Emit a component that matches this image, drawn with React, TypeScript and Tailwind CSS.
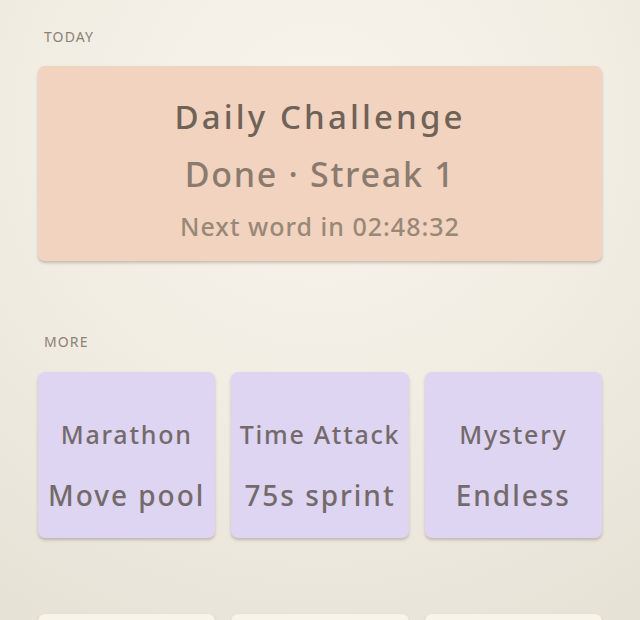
import React from 'react';

type Mode = { title: string; sub: string };

const modes: Mode[] = [
  { title: 'Marathon', sub: 'Move pool' },
  { title: 'Time Attack', sub: '75s sprint' },
  { title: 'Mystery', sub: 'Endless' },
];

const SectionLabel: React.FC<{ children: React.ReactNode }> = ({ children }) => (
  <div className="px-[6px] text-[14px] leading-4 tracking-[0.08em] text-[#8a8276]">{children}</div>
);

export default function App() {
  return (
    <div
      className="min-h-screen w-full bg-[radial-gradient(ellipse_90%_70%_at_50%_15%,#f7f4ec_0%,#f1ede3_50%,#e6e2d6_100%)] px-[38px] pt-[29px] pb-10 text-[#6f6259]"
      style={{ fontFamily: '"Noto Sans", "Open Sans", sans-serif' }}
    >
      <SectionLabel>TODAY</SectionLabel>

      {/* daily challenge */}
      <div className="mt-[21px] h-[195px] rounded-[7px] bg-[#f2d3bf] shadow-[0_2px_3px_rgba(90,75,55,0.3)] flex flex-col items-center pt-[31px]">
        <div className="text-[33px] leading-[40px] font-medium tracking-[0.095em] text-[#6f6259]">Daily Challenge</div>
        <div className="mt-[17px] text-[34px] leading-[40px] font-medium tracking-[0.05em] text-[#8b7b6f]">Done · Streak 1</div>
        <div className="mt-[16px] text-[25px] leading-[32px] font-medium tracking-[0.04em] text-[#988878]">Next word in 02:48:32</div>
      </div>

      <div className="mt-[73px]">
        <SectionLabel>MORE</SectionLabel>
      </div>

      <div className="mt-[22px] grid grid-cols-3 gap-4">
        {modes.map(m => (
          <div
            key={m.title}
            className="h-[166px] rounded-[7px] bg-[#ddd5f1] shadow-[0_2px_3px_rgba(90,75,55,0.3)] flex flex-col items-center pt-[46px]"
          >
            <div className="text-[25px] leading-[32px] font-medium tracking-[0.07em] text-[#746a6b] whitespace-nowrap">{m.title}</div>
            <div className="mt-[29px] text-[28px] leading-[32px] font-medium tracking-[0.07em] text-[#746a6b] whitespace-nowrap">{m.sub}</div>
          </div>
        ))}
      </div>

      <div className="mt-[76px] grid grid-cols-3 gap-4">
        {[0, 1, 2].map(i => (
          <div key={i} className="h-[166px] rounded-[7px] bg-[#f8f4ea] shadow-[0_2px_3px_rgba(90,75,55,0.3)]" />
        ))}
      </div>
    </div>
  );
}
